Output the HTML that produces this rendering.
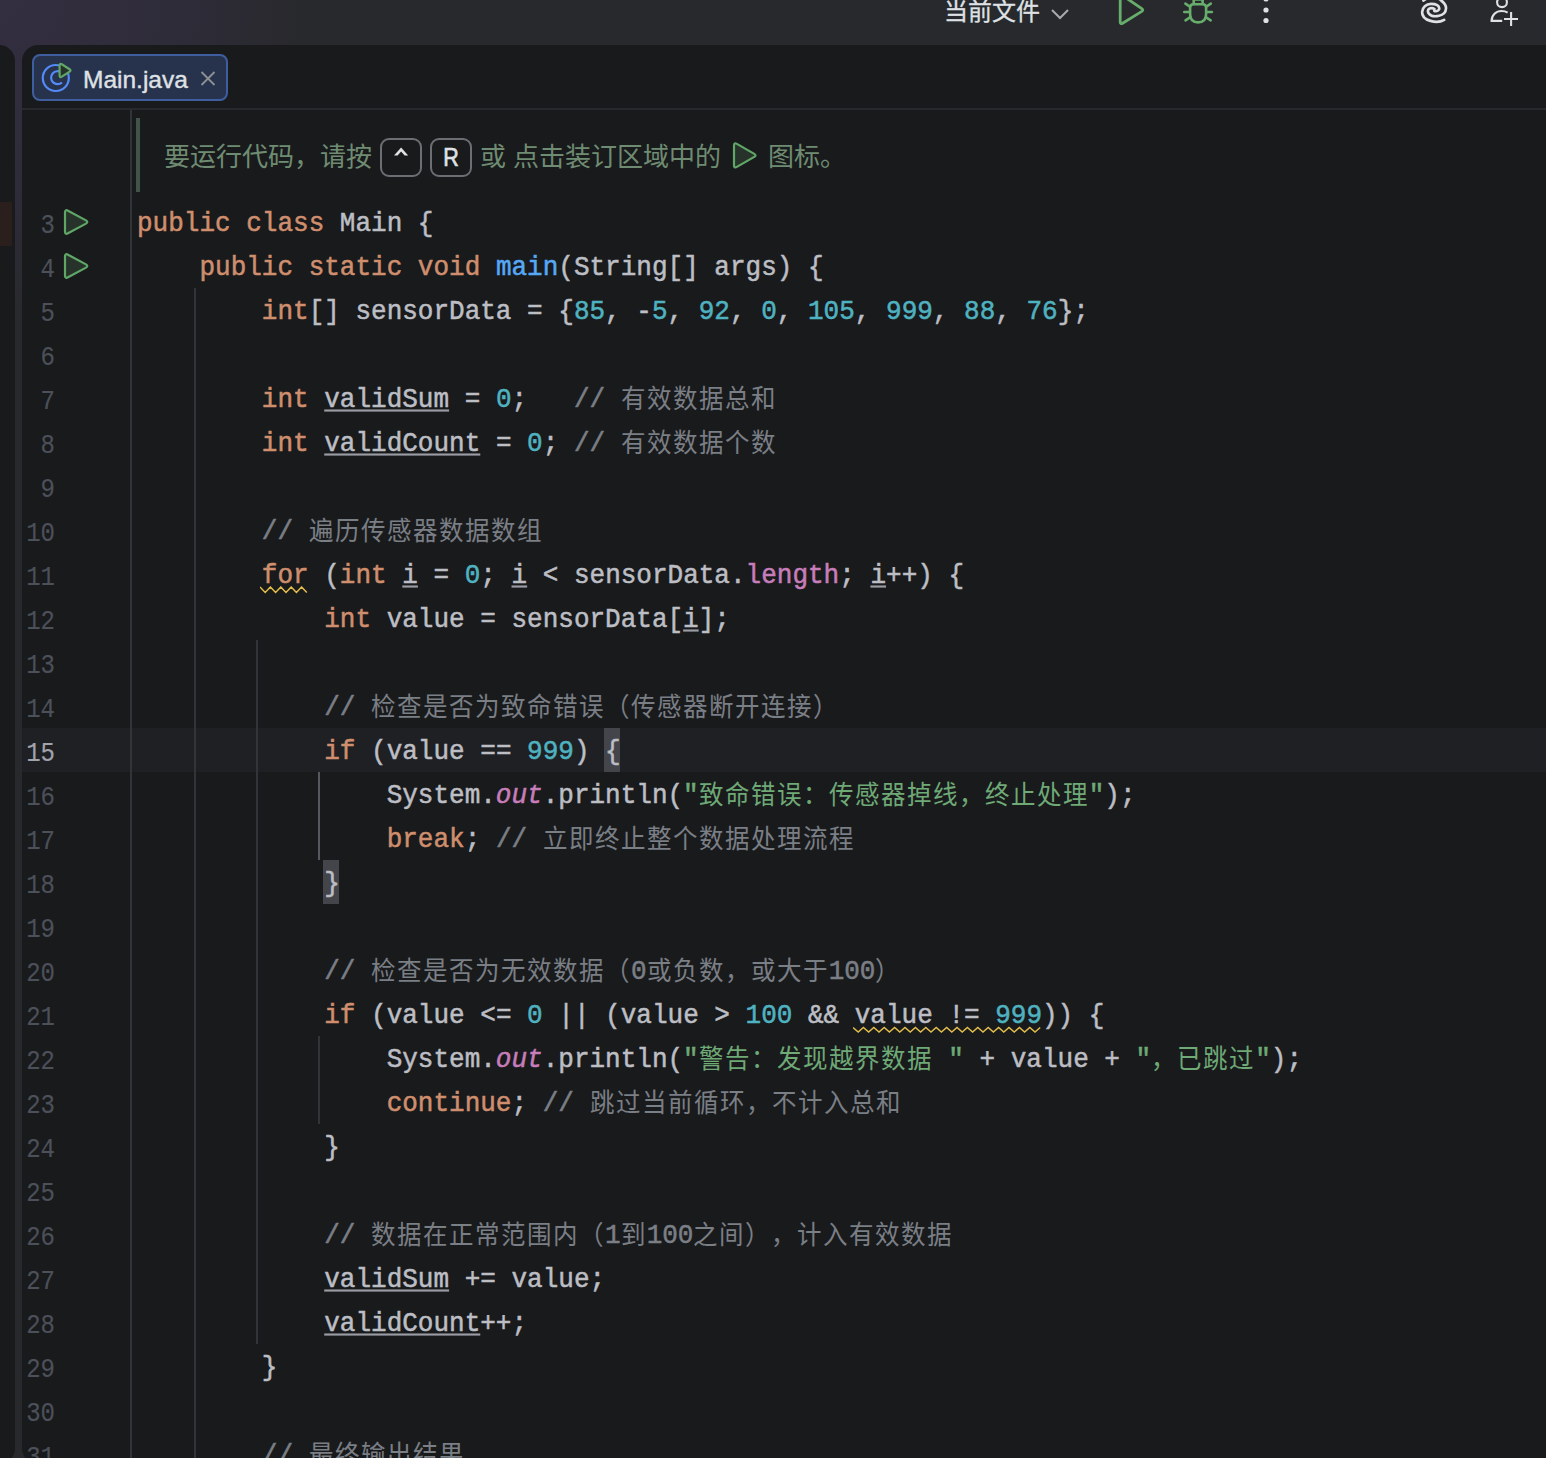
<!DOCTYPE html>
<html lang="zh-CN"><head><meta charset="utf-8">
<style>
html,body{margin:0;padding:0;}
body{width:1546px;height:1458px;overflow:hidden;position:relative;background:#28292d;font-family:"Liberation Sans",sans-serif;}
#bg{position:absolute;left:0;top:0;width:1546px;height:1458px;background:radial-gradient(ellipse 300px 320px at 0px 0px,#332e40 0%,#2f2c3a 55%,#28292d 100%);}
#lp{position:absolute;left:-30px;top:45px;width:45px;height:1419px;background:#191a1c;border-radius:16px;}
#mark{position:absolute;left:0;top:202px;width:12px;height:44px;background:#2a1f1d;}
#ed{position:absolute;left:22px;top:45px;width:1560px;height:1419px;background:#191a1c;border-radius:16px;overflow:hidden;}
.abs{position:absolute;}
#tabsep{position:absolute;left:0;top:63px;width:1560px;height:2px;background:#28292d;}
#tab{position:absolute;left:10px;top:9px;width:192px;height:43px;border:2px solid #3f5e9f;border-radius:8px;background:#27324d;}
#tabtxt{position:absolute;left:61px;top:20px;font-size:24.5px;line-height:30px;color:#dfe1e5;-webkit-text-stroke:0.4px #dfe1e5;}
.code{position:absolute;left:0;top:0;text-spacing-trim:space-all;font-family:"Liberation Mono",monospace;font-size:26px;color:#bcbec4;white-space:pre;-webkit-text-stroke:0.5px currentColor;}
.l{position:absolute;left:137px;height:44px;line-height:44px;transform-origin:0 28px;transform:translateY(2.2px) scaleY(1.08);}
.ln{position:absolute;left:0;width:55px;text-align:right;height:44px;line-height:44px;font-size:24px;color:#4b5059;-webkit-text-stroke:0.15px currentColor;transform-origin:0 28px;transform:translateY(5px) scaleY(1.15);}
.k{color:#cf8e6d}.n{color:#4fb2c0}.s{color:#6ea976}.c{color:#7a7e85}.m{color:#56a8f5}.f{color:#c77dba}.it{font-style:italic}
.u{text-decoration:underline;text-decoration-color:#9a9ca3;text-underline-offset:2px;text-decoration-thickness:2px;}
.g{position:absolute;width:2px;background:#313438;}
.z{font-size:24.5px;letter-spacing:2px;-webkit-text-stroke:0;vertical-align:-1px;}
#caret{position:absolute;left:22px;top:728px;width:1524px;height:44px;background:#1f2024;}
.bm{position:absolute;width:16px;height:44px;background:#43454a;}
.run{position:absolute;left:63px;width:26px;height:28px;}
.doc{position:absolute;text-spacing-trim:space-all;left:164px;top:140px;font-size:26px;line-height:34px;color:#6f8c73;white-space:pre;}
.key{position:absolute;top:138px;width:38px;height:35px;border:2px solid #6c6e73;border-radius:9px;color:#dfe1e5;font-size:24px;text-align:center;line-height:35px;}
.sq{position:absolute;height:8px;}
#tb{position:absolute;left:0;top:0;width:1546px;height:45px;}
</style></head><body>
<div id="bg"></div>
<div id="lp"></div>
<div id="mark"></div>
<div id="ed">
  <div id="tab"></div>
  <div id="tabsep"></div>
  <svg class="abs" style="left:0;top:0" width="240" height="64">
    <circle cx="33.8" cy="33" r="13" fill="none" stroke="#548af7" stroke-width="2.2"/>
    <path d="M40 37.5 A6.5 6.5 0 1 1 39.5 27.5" fill="none" stroke="#548af7" stroke-width="2.2"/>
    <path d="M37.6 20.4 Q37.6 17.9 39.8 19.2 L47.6 24.2 Q49.4 25.4 47.6 26.6 L39.8 31.6 Q37.6 32.9 37.6 30.4 Z" fill="#27332a" stroke="#60a767" stroke-width="2.2" stroke-linejoin="round"/>
    <path d="M179.5 27 L192.5 40 M192.5 27 L179.5 40" stroke="#8e9095" stroke-width="1.8"/>
  </svg>
  <div id="tabtxt">Main.java</div>
</div>
<div id="caret"></div>
<div class="g" style="left:130px;top:110px;height:1348px"></div>
<div class="g" style="left:194px;top:288px;height:1170px"></div>
<div class="g" style="left:256px;top:640px;height:704px"></div>
<div class="g" style="left:318px;top:772px;height:88px;background:#55585e"></div>
<div class="g" style="left:318px;top:1036px;height:88px"></div>
<div class="bm" style="left:604px;top:728px"></div>
<div class="bm" style="left:323px;top:860px"></div>
<!-- doc -->
<div class="abs" style="left:136px;top:118px;width:4px;height:74px;background:#42544a"></div>
<div class="doc">要运行代码，请按</div>
<div class="key" style="left:380px"></div>
<svg class="abs" style="left:380px;top:138px" width="42" height="38"><path d="M21.1 9.6 L28.2 17.4 L24.6 17.4 L21.1 13.4 L17.6 17.4 L14 17.4 Z" fill="#dfe1e5"/></svg>
<div class="key" style="left:430px"><span style="display:inline-block;transform:scaleX(0.86);-webkit-text-stroke:0.7px #dfe1e5;font-size:25px">R</span></div>
<div class="doc" style="left:480px">或 点击装订区域中的</div>
<svg class="abs" style="left:728px;top:138px" width="34" height="36"><path d="M6 7.6 Q6 4.3 8.9 5.9 L26.3 15.9 Q28.8 17.4 26.3 18.9 L8.9 28.9 Q6 30.5 6 27.2 Z" fill="#27332a" stroke="#60a767" stroke-width="2.2" stroke-linejoin="round"/></svg>
<div class="doc" style="left:768px">图标。</div>
<!-- gutter run icons -->
<svg class="run" style="top:208px" viewBox="0 0 26 28"><path d="M2 4.6 Q2 1.1 5 2.7 L23 12.4 Q25.6 14 23 15.6 L5 25.3 Q2 26.9 2 23.4 Z" fill="#27332a" stroke="#60a767" stroke-width="2.2" stroke-linejoin="round"/></svg>
<svg class="run" style="top:252px" viewBox="0 0 26 28"><path d="M2 4.6 Q2 1.1 5 2.7 L23 12.4 Q25.6 14 23 15.6 L5 25.3 Q2 26.9 2 23.4 Z" fill="#27332a" stroke="#60a767" stroke-width="2.2" stroke-linejoin="round"/></svg>
<!-- squiggles -->
<svg class="sq" style="left:260px;top:586px" width="48" height="8"><path d="M0 1 L5.2 6.5 L10.4 1 L15.6 6.5 L20.8 1 L26 6.5 L31.2 1 L36.4 6.5 L41.6 1 L46.8 6.5" fill="none" stroke="#e3bd4c" stroke-width="1.5"/></svg>
<svg class="sq" style="left:853px;top:1026px" width="190" height="8"><path d="M0 1.5 L5.2 6 L10.4 1.5 L15.6 6 L20.8 1.5 L26.0 6 L31.2 1.5 L36.4 6 L41.6 1.5 L46.8 6 L52.0 1.5 L57.2 6 L62.4 1.5 L67.6 6 L72.8 1.5 L78.0 6 L83.2 1.5 L88.4 6 L93.6 1.5 L98.8 6 L104.0 1.5 L109.2 6 L114.4 1.5 L119.6 6 L124.8 1.5 L130.0 6 L135.2 1.5 L140.4 6 L145.6 1.5 L150.8 6 L156.0 1.5 L161.2 6 L166.4 1.5 L171.6 6 L176.8 1.5 L182.0 6 L187.2 1.5" fill="none" stroke="#e3bd4c" stroke-width="1.5"/></svg>
<!-- line numbers -->
<div class="code">
<div class="ln" style="top:200px">3</div>
<div class="ln" style="top:244px">4</div>
<div class="ln" style="top:288px">5</div>
<div class="ln" style="top:332px">6</div>
<div class="ln" style="top:376px">7</div>
<div class="ln" style="top:420px">8</div>
<div class="ln" style="top:464px">9</div>
<div class="ln" style="top:508px">10</div>
<div class="ln" style="top:552px">11</div>
<div class="ln" style="top:596px">12</div>
<div class="ln" style="top:640px">13</div>
<div class="ln" style="top:684px">14</div>
<div class="ln" style="top:728px;color:#a1a3ab">15</div>
<div class="ln" style="top:772px">16</div>
<div class="ln" style="top:816px">17</div>
<div class="ln" style="top:860px">18</div>
<div class="ln" style="top:904px">19</div>
<div class="ln" style="top:948px">20</div>
<div class="ln" style="top:992px">21</div>
<div class="ln" style="top:1036px">22</div>
<div class="ln" style="top:1080px">23</div>
<div class="ln" style="top:1124px">24</div>
<div class="ln" style="top:1168px">25</div>
<div class="ln" style="top:1212px">26</div>
<div class="ln" style="top:1256px">27</div>
<div class="ln" style="top:1300px">28</div>
<div class="ln" style="top:1344px">29</div>
<div class="ln" style="top:1388px">30</div>
<div class="ln" style="top:1432px">31</div>
</div>
<div class="code">
<div class="l" style="top:200px"><span class="k">public class</span> Main {</div>
<div class="l" style="top:244px">    <span class="k">public static void</span> <span class="m">main</span>(String[] args) {</div>
<div class="l" style="top:288px">        <span class="k">int</span>[] sensorData = {<span class="n">85</span>, -<span class="n">5</span>, <span class="n">92</span>, <span class="n">0</span>, <span class="n">105</span>, <span class="n">999</span>, <span class="n">88</span>, <span class="n">76</span>};</div>
<div class="l" style="top:376px">        <span class="k">int</span> <span class="u">validSum</span> = <span class="n">0</span>;   <span class="c">// <span class="z">有效数据总和</span></span></div>
<div class="l" style="top:420px">        <span class="k">int</span> <span class="u">validCount</span> = <span class="n">0</span>; <span class="c">// <span class="z">有效数据个数</span></span></div>
<div class="l" style="top:508px">        <span class="c">// <span class="z">遍历传感器数据数组</span></span></div>
<div class="l" style="top:552px">        <span class="k">for</span> (<span class="k">int</span> <span class="u">i</span> = <span class="n">0</span>; <span class="u">i</span> &lt; sensorData.<span class="f">length</span>; <span class="u">i</span>++) {</div>
<div class="l" style="top:596px">            <span class="k">int</span> value = sensorData[<span class="u">i</span>];</div>
<div class="l" style="top:684px">            <span class="c">// <span class="z">检查是否为致命错误（传感器断开连接）</span></span></div>
<div class="l" style="top:728px">            <span class="k">if</span> (value == <span class="n">999</span>) {</div>
<div class="l" style="top:772px">                System.<span class="f it">out</span>.println(<span class="s">"<span class="z">致命错误：传感器掉线，终止处理</span>"</span>);</div>
<div class="l" style="top:816px">                <span class="k">break</span>; <span class="c">// <span class="z">立即终止整个数据处理流程</span></span></div>
<div class="l" style="top:860px">            }</div>
<div class="l" style="top:948px">            <span class="c">// <span class="z">检查是否为无效数据（</span>0<span class="z">或负数，或大于</span>100<span class="z">）</span></span></div>
<div class="l" style="top:992px">            <span class="k">if</span> (value &lt;= <span class="n">0</span> || (value &gt; <span class="n">100</span> &amp;&amp; value != <span class="n">999</span>)) {</div>
<div class="l" style="top:1036px">                System.<span class="f it">out</span>.println(<span class="s">"<span class="z">警告：发现越界数据</span> "</span> + value + <span class="s">"<span class="z">，已跳过</span>"</span>);</div>
<div class="l" style="top:1080px">                <span class="k">continue</span>; <span class="c">// <span class="z">跳过当前循环，不计入总和</span></span></div>
<div class="l" style="top:1124px">            }</div>
<div class="l" style="top:1212px">            <span class="c">// <span class="z">数据在正常范围内（</span>1<span class="z">到</span>100<span class="z">之间），计入有效数据</span></span></div>
<div class="l" style="top:1256px">            <span class="u">validSum</span> += value;</div>
<div class="l" style="top:1300px">            <span class="u">validCount</span>++;</div>
<div class="l" style="top:1344px">        }</div>
<div class="l" style="top:1432px">        <span class="c">// <span class="z">最终输出结果</span></span></div>
</div>
<!-- toolbar -->
<div class="abs" style="left:943.6px;top:-3px;font-size:24px;line-height:30px;color:#dfe1e5;-webkit-text-stroke:0.3px #dfe1e5;">当前文件</div>
<svg class="abs" style="left:1048px;top:4px" width="24" height="20"><path d="M4 6 L12 14 L20 6" fill="none" stroke="#a8aab0" stroke-width="2"/></svg>
<svg class="abs" style="left:1110px;top:0" width="40" height="30"><path d="M10.2 -3.2 Q10.2 -5.8 12.6 -4.4 L31.8 8.6 Q33.8 10 31.8 11.4 L12.6 23.2 Q10.2 24.6 10.2 22 Z" fill="none" stroke="#67ad6c" stroke-width="2.8" stroke-linejoin="round"/></svg>
<svg class="abs" style="left:1170px;top:0" width="60" height="30"><g fill="none" stroke="#67ad6c" stroke-width="2.6" stroke-linecap="round" stroke-linejoin="round"><path d="M20.1 7.5 Q20.1 4.2 23.5 4.2 L32.7 4.2 Q36.1 4.2 36.1 7.5 L36.1 14 Q36.1 22.4 28.1 22.4 Q20.1 22.4 20.1 14 Z"/><path d="M23.7 4 L23.7 -0.5 L32.6 -0.5 L32.6 4"/><path d="M20 6.8 L15.4 3.6 M20 12 L14.3 12 M20.4 17.2 L15.5 20.3 M36.2 6.8 L40.8 3.6 M36.2 12 L41.9 12 M35.8 17.2 L40.7 20.3"/></g></svg>
<svg class="abs" style="left:1258px;top:-6px" width="16" height="34"><circle cx="8" cy="5" r="2.6" fill="#dfe1e5"/><circle cx="8" cy="16" r="2.6" fill="#dfe1e5"/><circle cx="8" cy="26.5" r="2.6" fill="#dfe1e5"/></svg>
<svg class="abs" style="left:1415px;top:0" width="40" height="28"><g fill="none" stroke="#dfe1e5" stroke-width="2.7" stroke-linecap="round"><path d="M29.2 19.9 C26 21.8 20 22.3 15.5 20.9 C10 19.3 6.9 15.8 7.1 12 C7.3 7.2 11.2 3.9 16 3.9 C20.5 3.9 24 5.6 24.3 8.3 C24.5 10.5 22 11.5 19.2 10.9"/><path d="M8.5 0.5 C13 -3.5 22 -3.5 26 0.3 C29.6 3 31.2 6.2 31 8.5 C30.8 12 28.5 14.8 24 15.8 C20 16.7 15.8 15.8 14 13.8 C12.2 11.8 12.8 9.3 14.5 8.6 C16 8 18 8.2 19.4 8.9"/></g></svg>
<svg class="abs" style="left:1480px;top:0" width="50" height="34"><g fill="none" stroke="#dfe1e5" stroke-width="2.1"><circle cx="22" cy="2.2" r="4.9"/><path d="M22.2 20.9 L11.6 20.9 C11.6 15 16 11 21.5 11 C24 11 26 11.5 27.6 12.6 M31.1 12.1 L31.1 26 M24 19 L38 19"/></g></svg>

</body></html>
